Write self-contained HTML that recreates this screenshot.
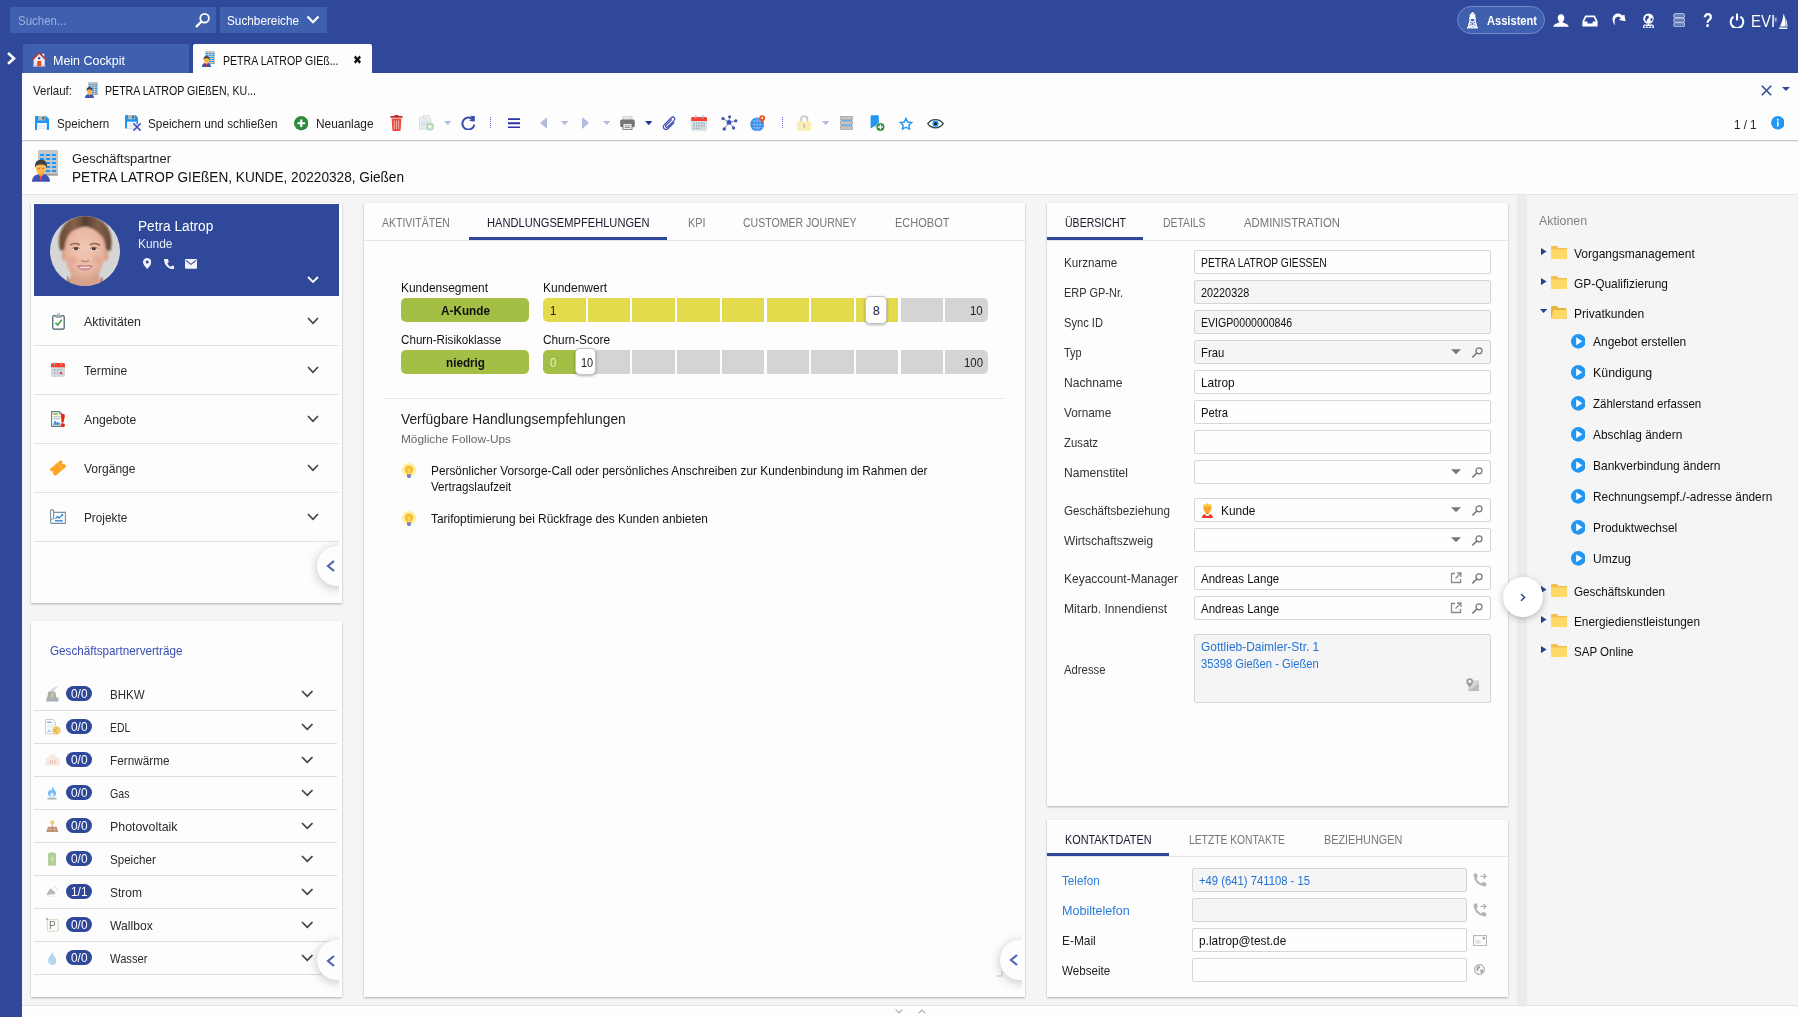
<!DOCTYPE html>
<html lang="de"><head><meta charset="utf-8"><title>PETRA LATROP GIEßEN</title>
<style>
html,body{margin:0;padding:0;}
body{width:1798px;height:1017px;overflow:hidden;background:#2f4899;font-family:"Liberation Sans", sans-serif;position:relative;}
#app{position:absolute;left:0;top:0;width:1798px;height:1017px;overflow:hidden;}
#app div,#app svg,#app span.t{position:absolute;box-sizing:border-box;}
span.t{white-space:pre;transform-origin:0 0;}
.card{background:#fdfdfd;box-shadow:0 1px 2px rgba(0,0,0,.28);}
.inp{border:1px solid #d6d6d6;border-radius:2px;background:#fefefe;}
.dis{background:#f5f5f5;}
.sep{height:1px;background:#e2e2e2;}
</style></head><body><div id="app">
<div style="left:22px;top:73px;width:1776px;height:944px;background:#fdfdfd"></div>
<div style="left:22px;top:195px;width:1776px;height:810px;background:#f5f5f5"></div>
<div style="left:22px;top:194px;width:1776px;height:1px;background:#e6e6e6"></div>
<div style="left:22px;top:1005px;width:1776px;height:1px;background:#e4e4e4"></div>
<div style="left:22px;top:140px;width:1776px;height:1px;background:#c9c9c9"></div>
<div style="left:22px;top:141px;width:1776px;height:1px;background:#ececec"></div>
<div style="left:10px;top:7px;width:205.5px;height:26px;background:#3f60af"></div>
<span class="t" style="left:17.50px;top:14px;font-size:12.58px;line-height:14px;color:#9fb0dc;transform:scaleX(0.9124);">Suchen...</span>
<svg style="left:193.6px;top:12px;" width="18" height="18" viewBox="0 0 18 18"><circle cx="10.6" cy="6.2" r="4.3" fill="none" stroke="#fff" stroke-width="1.8"/><path d="M7.4 9.6 L2.6 14.4" stroke="#fff" stroke-width="2.2" stroke-linecap="round"/></svg>
<div style="left:220px;top:7px;width:106.5px;height:26px;background:#3f60af"></div>
<span class="t" style="left:226.50px;top:14px;font-size:12.58px;line-height:14px;color:#fff;transform:scaleX(0.9360);">Suchbereiche</span>
<svg style="left:306px;top:15px;" width="14" height="10" viewBox="0 0 14 10"><path d="M1.5 1.5 L7 7.2 L12.5 1.5" fill="none" stroke="#fff" stroke-width="2.2"/></svg>
<svg style="left:5.6px;top:51.4px;" width="12" height="16" viewBox="0 0 12 16"><path d="M2 2 L8 7.4 L2 12.8" fill="none" stroke="#fff" stroke-width="2.6"/></svg>
<div style="left:23px;top:44px;width:166px;height:29px;background:#3f60af;border-radius:2px 2px 0 0"></div>
<span class="t" style="left:52.50px;top:54px;font-size:12.58px;line-height:14px;color:#fff;transform:scaleX(0.9903);">Mein Cockpit</span>
<div style="left:193px;top:44px;width:178.5px;height:29px;background:#fdfdfd;border-radius:2px 2px 0 0"></div>
<span class="t" style="left:222.50px;top:54px;font-size:12.58px;line-height:14px;color:#111;transform:scaleX(0.8416);">PETRA LATROP GIEß...</span>
<span class="t" style="left:352.90px;top:53px;font-size:12.1px;line-height:14px;color:#111;transform:scaleX(0.8800);font-family:'DejaVu Sans',sans-serif;">✖</span>
<span class="t" style="left:33.00px;top:84px;font-size:12.58px;line-height:14px;color:#222;transform:scaleX(0.9143);">Verlauf:</span>
<span class="t" style="left:104.50px;top:84px;font-size:12.58px;line-height:14px;color:#111;transform:scaleX(0.8428);">PETRA LATROP GIEßEN, KU...</span>
<svg style="left:1761px;top:85px;" width="11" height="11" viewBox="0 0 11 11"><path d="M0.8 0.8 L10.2 10.2 M10.2 0.8 L0.8 10.2" stroke="#2f4899" stroke-width="1.6"/></svg>
<svg style="left:1782px;top:87px;" width="8" height="4" viewBox="0 0 8 4"><path d="M0 0 H8 L4 4Z" fill="#2f4899"/></svg>
<span class="t" style="left:57.00px;top:117px;font-size:12.58px;line-height:14px;color:#222;transform:scaleX(0.9225);">Speichern</span>
<span class="t" style="left:147.50px;top:117px;font-size:12.58px;line-height:14px;color:#222;transform:scaleX(0.9353);">Speichern und schließen</span>
<span class="t" style="left:316.00px;top:117px;font-size:12.58px;line-height:14px;color:#222;transform:scaleX(0.9448);">Neuanlage</span>
<span class="t" style="left:1734.00px;top:117px;font-size:13.55px;line-height:15px;color:#222;transform:scaleX(0.8531);">1 / 1</span>
<span class="t" style="left:72.00px;top:151px;font-size:13.55px;line-height:15px;color:#222;transform:scaleX(0.9526);">Geschäftspartner</span>
<span class="t" style="left:72.00px;top:169px;font-size:14.52px;line-height:16px;color:#111;transform:scaleX(0.9388);">PETRA LATROP GIEßEN, KUNDE, 20220328, Gießen</span>
<div class="card" style="left:31px;top:203px;width:311px;height:400px;overflow:hidden"></div>
<div style="left:34px;top:204px;width:305px;height:92px;background:#2f4899"></div>
<span class="t" style="left:138.00px;top:218px;font-size:14.52px;line-height:16px;color:#fff;transform:scaleX(0.9419);">Petra Latrop</span>
<span class="t" style="left:138.00px;top:237px;font-size:12.58px;line-height:14px;color:#e8ecf7;transform:scaleX(0.9485);">Kunde</span>
<svg style="left:307px;top:276px;" width="12" height="8" viewBox="0 0 12 8"><path d="M1 1 L6 6 L11 1" fill="none" stroke="#fff" stroke-width="1.8"/></svg>
<span class="t" style="left:84.00px;top:314px;font-size:13.55px;line-height:15px;color:#2a2a2a;transform:scaleX(0.9120);">Aktivitäten</span>
<svg style="left:307px;top:317px;" width="12" height="8" viewBox="0 0 12 8"><path d="M1 1 L6 6.3 L11 1" fill="none" stroke="#444" stroke-width="1.7"/></svg>
<div style="left:34px;top:345px;width:305px;height:1px;background:#e2e2e2"></div>
<span class="t" style="left:84.00px;top:363px;font-size:13.55px;line-height:15px;color:#2a2a2a;transform:scaleX(0.8975);">Termine</span>
<svg style="left:307px;top:366px;" width="12" height="8" viewBox="0 0 12 8"><path d="M1 1 L6 6.3 L11 1" fill="none" stroke="#444" stroke-width="1.7"/></svg>
<div style="left:34px;top:394px;width:305px;height:1px;background:#e2e2e2"></div>
<span class="t" style="left:84.00px;top:412px;font-size:13.55px;line-height:15px;color:#2a2a2a;transform:scaleX(0.9006);">Angebote</span>
<svg style="left:307px;top:415px;" width="12" height="8" viewBox="0 0 12 8"><path d="M1 1 L6 6.3 L11 1" fill="none" stroke="#444" stroke-width="1.7"/></svg>
<div style="left:34px;top:443px;width:305px;height:1px;background:#e2e2e2"></div>
<span class="t" style="left:84.00px;top:461px;font-size:13.55px;line-height:15px;color:#2a2a2a;transform:scaleX(0.8877);">Vorgänge</span>
<svg style="left:307px;top:464px;" width="12" height="8" viewBox="0 0 12 8"><path d="M1 1 L6 6.3 L11 1" fill="none" stroke="#444" stroke-width="1.7"/></svg>
<div style="left:34px;top:492px;width:305px;height:1px;background:#e2e2e2"></div>
<span class="t" style="left:84.00px;top:510px;font-size:13.55px;line-height:15px;color:#2a2a2a;transform:scaleX(0.8702);">Projekte</span>
<svg style="left:307px;top:513px;" width="12" height="8" viewBox="0 0 12 8"><path d="M1 1 L6 6.3 L11 1" fill="none" stroke="#444" stroke-width="1.7"/></svg>
<div style="left:34px;top:541px;width:305px;height:1px;background:#e2e2e2"></div>
<div style="left:31px;top:530px;width:308px;height:72px;overflow:hidden"><div style="left:285.5px;top:16px;width:40px;height:40px;border-radius:50%;background:#fdfdfd;box-shadow:0 2px 11px rgba(0,0,0,.24)"></div></div>
<svg style="left:326px;top:560px;" width="10" height="12" viewBox="0 0 10 12"><path d="M8 1 L2 6 L8 11" fill="none" stroke="#5265b5" stroke-width="2.2"/></svg>
<div class="card" style="left:31px;top:621px;width:311px;height:376px"></div>
<span class="t" style="left:50.00px;top:644px;font-size:12.58px;line-height:14px;color:#3a4db0;transform:scaleX(0.9290);">Geschäftspartnerverträge</span>
<div style="left:65.75px;top:686.25px;width:26px;height:15px;background:#2f4899;border-radius:8px"></div>
<span class="t" style="left:70.75px;top:687px;font-size:12.58px;line-height:14px;color:#fff;transform:scaleX(0.9429);">0/0</span>
<span class="t" style="left:109.75px;top:687px;font-size:13.07px;line-height:15px;color:#2a2a2a;transform:scaleX(0.8804);">BHKW</span>
<svg style="left:300.5px;top:690.3px;" width="12.5" height="8" viewBox="0 0 12.5 8"><path d="M1 1 L6.25 6.3 L11.5 1" fill="none" stroke="#444" stroke-width="1.7"/></svg>
<div style="left:34px;top:710px;width:303px;height:1px;background:#dedede"></div>
<div style="left:65.75px;top:719.25px;width:26px;height:15px;background:#2f4899;border-radius:8px"></div>
<span class="t" style="left:70.75px;top:720px;font-size:12.58px;line-height:14px;color:#fff;transform:scaleX(0.9429);">0/0</span>
<span class="t" style="left:109.75px;top:720px;font-size:13.07px;line-height:15px;color:#2a2a2a;transform:scaleX(0.7966);">EDL</span>
<svg style="left:300.5px;top:723.3px;" width="12.5" height="8" viewBox="0 0 12.5 8"><path d="M1 1 L6.25 6.3 L11.5 1" fill="none" stroke="#444" stroke-width="1.7"/></svg>
<div style="left:34px;top:743px;width:303px;height:1px;background:#dedede"></div>
<div style="left:65.75px;top:752.25px;width:26px;height:15px;background:#2f4899;border-radius:8px"></div>
<span class="t" style="left:70.75px;top:753px;font-size:12.58px;line-height:14px;color:#fff;transform:scaleX(0.9429);">0/0</span>
<span class="t" style="left:109.75px;top:753px;font-size:13.07px;line-height:15px;color:#2a2a2a;transform:scaleX(0.9007);">Fernwärme</span>
<svg style="left:300.5px;top:756.3px;" width="12.5" height="8" viewBox="0 0 12.5 8"><path d="M1 1 L6.25 6.3 L11.5 1" fill="none" stroke="#444" stroke-width="1.7"/></svg>
<div style="left:34px;top:776px;width:303px;height:1px;background:#dedede"></div>
<div style="left:65.75px;top:785.25px;width:26px;height:15px;background:#2f4899;border-radius:8px"></div>
<span class="t" style="left:70.75px;top:786px;font-size:12.58px;line-height:14px;color:#fff;transform:scaleX(0.9429);">0/0</span>
<span class="t" style="left:109.75px;top:786px;font-size:13.07px;line-height:15px;color:#2a2a2a;transform:scaleX(0.8136);">Gas</span>
<svg style="left:300.5px;top:789.3px;" width="12.5" height="8" viewBox="0 0 12.5 8"><path d="M1 1 L6.25 6.3 L11.5 1" fill="none" stroke="#444" stroke-width="1.7"/></svg>
<div style="left:34px;top:809px;width:303px;height:1px;background:#dedede"></div>
<div style="left:65.75px;top:818.25px;width:26px;height:15px;background:#2f4899;border-radius:8px"></div>
<span class="t" style="left:70.75px;top:819px;font-size:12.58px;line-height:14px;color:#fff;transform:scaleX(0.9429);">0/0</span>
<span class="t" style="left:109.75px;top:819px;font-size:13.07px;line-height:15px;color:#2a2a2a;transform:scaleX(0.9484);">Photovoltaik</span>
<svg style="left:300.5px;top:822.3px;" width="12.5" height="8" viewBox="0 0 12.5 8"><path d="M1 1 L6.25 6.3 L11.5 1" fill="none" stroke="#444" stroke-width="1.7"/></svg>
<div style="left:34px;top:842px;width:303px;height:1px;background:#dedede"></div>
<div style="left:65.75px;top:851.25px;width:26px;height:15px;background:#2f4899;border-radius:8px"></div>
<span class="t" style="left:70.75px;top:852px;font-size:12.58px;line-height:14px;color:#fff;transform:scaleX(0.9429);">0/0</span>
<span class="t" style="left:109.75px;top:852px;font-size:13.07px;line-height:15px;color:#2a2a2a;transform:scaleX(0.8873);">Speicher</span>
<svg style="left:300.5px;top:855.3px;" width="12.5" height="8" viewBox="0 0 12.5 8"><path d="M1 1 L6.25 6.3 L11.5 1" fill="none" stroke="#444" stroke-width="1.7"/></svg>
<div style="left:34px;top:875px;width:303px;height:1px;background:#dedede"></div>
<div style="left:65.75px;top:884.25px;width:26px;height:15px;background:#2f4899;border-radius:8px"></div>
<span class="t" style="left:70.75px;top:885px;font-size:12.58px;line-height:14px;color:#fff;transform:scaleX(0.9429);">1/1</span>
<span class="t" style="left:109.75px;top:885px;font-size:13.07px;line-height:15px;color:#2a2a2a;transform:scaleX(0.9184);">Strom</span>
<svg style="left:300.5px;top:888.3px;" width="12.5" height="8" viewBox="0 0 12.5 8"><path d="M1 1 L6.25 6.3 L11.5 1" fill="none" stroke="#444" stroke-width="1.7"/></svg>
<div style="left:34px;top:908px;width:303px;height:1px;background:#dedede"></div>
<div style="left:65.75px;top:917.25px;width:26px;height:15px;background:#2f4899;border-radius:8px"></div>
<span class="t" style="left:70.75px;top:918px;font-size:12.58px;line-height:14px;color:#fff;transform:scaleX(0.9429);">0/0</span>
<span class="t" style="left:109.75px;top:918px;font-size:13.07px;line-height:15px;color:#2a2a2a;transform:scaleX(0.9297);">Wallbox</span>
<svg style="left:300.5px;top:921.3px;" width="12.5" height="8" viewBox="0 0 12.5 8"><path d="M1 1 L6.25 6.3 L11.5 1" fill="none" stroke="#444" stroke-width="1.7"/></svg>
<div style="left:34px;top:941px;width:303px;height:1px;background:#dedede"></div>
<div style="left:65.75px;top:950.25px;width:26px;height:15px;background:#2f4899;border-radius:8px"></div>
<span class="t" style="left:70.75px;top:951px;font-size:12.58px;line-height:14px;color:#fff;transform:scaleX(0.9429);">0/0</span>
<span class="t" style="left:109.75px;top:951px;font-size:13.07px;line-height:15px;color:#2a2a2a;transform:scaleX(0.8562);">Wasser</span>
<svg style="left:300.5px;top:954.3px;" width="12.5" height="8" viewBox="0 0 12.5 8"><path d="M1 1 L6.25 6.3 L11.5 1" fill="none" stroke="#444" stroke-width="1.7"/></svg>
<div style="left:34px;top:974px;width:303px;height:1px;background:#dedede"></div>
<div style="left:31px;top:925px;width:308px;height:70px;overflow:hidden"><div style="left:285.5px;top:15px;width:40px;height:40px;border-radius:50%;background:#fdfdfd;box-shadow:0 2px 11px rgba(0,0,0,.24)"></div></div>
<svg style="left:326px;top:954.5px;" width="10" height="12" viewBox="0 0 10 12"><path d="M8 1 L2 6 L8 11" fill="none" stroke="#5265b5" stroke-width="2.2"/></svg>
<div class="card" style="left:364px;top:203px;width:661px;height:794px"></div>
<div style="left:364px;top:240px;width:661px;height:1px;background:#e4e4e4"></div>
<div style="left:469px;top:236.5px;width:197.5px;height:3px;background:#2f4899"></div>
<span class="t" style="left:381.50px;top:216px;font-size:12.58px;line-height:14px;color:#777;transform:scaleX(0.8356);">AKTIVITÄTEN</span>
<span class="t" style="left:486.50px;top:216px;font-size:12.58px;line-height:14px;color:#1a1a2e;transform:scaleX(0.8841);">HANDLUNGSEMPFEHLUNGEN</span>
<span class="t" style="left:687.50px;top:216px;font-size:12.58px;line-height:14px;color:#777;transform:scaleX(0.8629);">KPI</span>
<span class="t" style="left:742.50px;top:216px;font-size:12.58px;line-height:14px;color:#777;transform:scaleX(0.8385);">CUSTOMER JOURNEY</span>
<span class="t" style="left:894.50px;top:216px;font-size:12.58px;line-height:14px;color:#777;transform:scaleX(0.8762);">ECHOBOT</span>
<span class="t" style="left:401.00px;top:281px;font-size:12.58px;line-height:14px;color:#111;transform:scaleX(0.9497);">Kundensegment</span>
<span class="t" style="left:543.00px;top:281px;font-size:12.58px;line-height:14px;color:#111;transform:scaleX(0.9532);">Kundenwert</span>
<span class="t" style="left:401.00px;top:333px;font-size:12.58px;line-height:14px;color:#111;transform:scaleX(0.9252);">Churn-Risikoklasse</span>
<span class="t" style="left:543.00px;top:333px;font-size:12.58px;line-height:14px;color:#111;transform:scaleX(0.9395);">Churn-Score</span>
<div style="left:401.25px;top:298px;width:127.5px;height:24px;background:#a3bf45;border-radius:5px"></div>
<span class="t" style="left:441.00px;top:304px;font-size:12.58px;line-height:14px;color:#111;font-weight:700;transform:scaleX(0.9350);">A-Kunde</span>
<div style="left:401.25px;top:350px;width:127.5px;height:24px;background:#a3bf45;border-radius:5px"></div>
<span class="t" style="left:446.00px;top:356px;font-size:12.58px;line-height:14px;color:#111;font-weight:700;transform:scaleX(0.9300);">niedrig</span>
<div style="left:543.0px;top:298px;width:42.5px;height:24px;background:#e3db4b;border-radius:5px 0 0 5px;"></div>
<div style="left:587.7px;top:298px;width:42.5px;height:24px;background:#e3db4b;"></div>
<div style="left:632.4px;top:298px;width:42.5px;height:24px;background:#e3db4b;"></div>
<div style="left:677.1px;top:298px;width:42.5px;height:24px;background:#e3db4b;"></div>
<div style="left:721.8px;top:298px;width:42.5px;height:24px;background:#e3db4b;"></div>
<div style="left:766.5px;top:298px;width:42.5px;height:24px;background:#e3db4b;"></div>
<div style="left:811.2px;top:298px;width:42.5px;height:24px;background:#e3db4b;"></div>
<div style="left:855.9px;top:298px;width:42.5px;height:24px;background:#e3db4b;"></div>
<div style="left:900.6px;top:298px;width:42.5px;height:24px;background:#d4d4d4;"></div>
<div style="left:945.3px;top:298px;width:42.7px;height:24px;background:#d4d4d4;border-radius:0 5px 5px 0;"></div>
<div style="left:543.0px;top:350px;width:42.5px;height:24px;background:#a3bf45;border-radius:5px 0 0 5px;"></div>
<div style="left:587.7px;top:350px;width:42.5px;height:24px;background:#d4d4d4;"></div>
<div style="left:632.4px;top:350px;width:42.5px;height:24px;background:#d4d4d4;"></div>
<div style="left:677.1px;top:350px;width:42.5px;height:24px;background:#d4d4d4;"></div>
<div style="left:721.8px;top:350px;width:42.5px;height:24px;background:#d4d4d4;"></div>
<div style="left:766.5px;top:350px;width:42.5px;height:24px;background:#d4d4d4;"></div>
<div style="left:811.2px;top:350px;width:42.5px;height:24px;background:#d4d4d4;"></div>
<div style="left:855.9px;top:350px;width:42.5px;height:24px;background:#d4d4d4;"></div>
<div style="left:900.6px;top:350px;width:42.5px;height:24px;background:#d4d4d4;"></div>
<div style="left:945.3px;top:350px;width:42.7px;height:24px;background:#d4d4d4;border-radius:0 5px 5px 0;"></div>
<span class="t" style="left:550.25px;top:304px;font-size:12.58px;line-height:14px;color:#222;transform:scaleX(0.9050);">1</span>
<span class="t" style="left:970.33px;top:304px;font-size:12.58px;line-height:14px;color:#222;transform:scaleX(0.9050);">10</span>
<span class="t" style="left:550.00px;top:356px;font-size:12.58px;line-height:14px;color:#eaf2c8;transform:scaleX(0.9050);">0</span>
<span class="t" style="left:964.00px;top:356px;font-size:12.58px;line-height:14px;color:#222;transform:scaleX(0.9050);">100</span>
<div style="left:865.4px;top:296px;width:21.3px;height:27.5px;background:#fff;border:1px solid #c4c4c4;border-radius:5px;box-shadow:0 1px 3px rgba(0,0,0,.3)"></div>
<span class="t" style="left:872.70px;top:304px;font-size:12.58px;line-height:14px;color:#222;">8</span>
<div style="left:575.2px;top:348.2px;width:21px;height:27.3px;background:#fff;border:1px solid #c4c4c4;border-radius:5px;box-shadow:0 1px 3px rgba(0,0,0,.3)"></div>
<span class="t" style="left:580.50px;top:356px;font-size:12.58px;line-height:14px;color:#222;transform:scaleX(0.8714);">10</span>
<div style="left:383px;top:398px;width:622px;height:1px;background:#e8e8e8"></div>
<span class="t" style="left:401.25px;top:411px;font-size:14.52px;line-height:16px;color:#222;transform:scaleX(0.9504);">Verfügbare Handlungsempfehlungen</span>
<span class="t" style="left:401.00px;top:432px;font-size:11.62px;line-height:13px;color:#666;transform:scaleX(1.0209);">Mögliche Follow-Ups</span>
<span class="t" style="left:431.00px;top:464px;font-size:12.58px;line-height:14px;color:#111;transform:scaleX(0.9418);">Persönlicher Vorsorge-Call oder persönliches Anschreiben zur Kundenbindung im Rahmen der</span>
<span class="t" style="left:431.00px;top:480px;font-size:12.58px;line-height:14px;color:#111;transform:scaleX(0.9256);">Vertragslaufzeit</span>
<span class="t" style="left:431.00px;top:512px;font-size:12.58px;line-height:14px;color:#111;transform:scaleX(0.9454);">Tarifoptimierung bei Rückfrage des Kunden anbieten</span>
<div style="left:980px;top:925px;width:42px;height:70px;overflow:hidden"><div style="left:20px;top:15px;width:40px;height:40px;border-radius:50%;background:#fdfdfd;box-shadow:0 2px 11px rgba(0,0,0,.24)"></div></div>
<svg style="left:997px;top:971px;" width="6" height="6" viewBox="0 0 6 6"><path d="M0 5 H5 V0" fill="none" stroke="#bdbdbd" stroke-width="1.2"/></svg>
<svg style="left:1009px;top:954px;" width="10" height="12" viewBox="0 0 10 12"><path d="M8 1 L2 6 L8 11" fill="none" stroke="#5265b5" stroke-width="2.2"/></svg>
<div class="card" style="left:1047px;top:203px;width:461px;height:602.5px"></div>
<div style="left:1047px;top:240px;width:461px;height:1px;background:#e4e4e4"></div>
<div style="left:1047px;top:236.5px;width:95.5px;height:3px;background:#2f4899"></div>
<span class="t" style="left:1064.50px;top:216px;font-size:12.58px;line-height:14px;color:#1a1a2e;transform:scaleX(0.8392);">ÜBERSICHT</span>
<span class="t" style="left:1162.50px;top:216px;font-size:12.58px;line-height:14px;color:#777;transform:scaleX(0.8252);">DETAILS</span>
<span class="t" style="left:1243.50px;top:216px;font-size:12.58px;line-height:14px;color:#777;transform:scaleX(0.8998);">ADMINISTRATION</span>
<div class="inp" style="left:1193.5px;top:250.25px;width:297.5px;height:23.5px"></div>
<span class="t" style="left:1064.00px;top:256px;font-size:12.58px;line-height:14px;color:#333;transform:scaleX(0.9289);">Kurzname</span>
<span class="t" style="left:1201.00px;top:256px;font-size:12.58px;line-height:14px;color:#111;transform:scaleX(0.8201);">PETRA LATROP GIESSEN</span>
<div class="inp dis" style="left:1193.5px;top:280.25px;width:297.5px;height:23.5px"></div>
<span class="t" style="left:1064.00px;top:286px;font-size:12.58px;line-height:14px;color:#333;transform:scaleX(0.8731);">ERP GP-Nr.</span>
<span class="t" style="left:1201.00px;top:286px;font-size:12.58px;line-height:14px;color:#111;transform:scaleX(0.8621);">20220328</span>
<div class="inp dis" style="left:1193.5px;top:310.25px;width:297.5px;height:23.5px"></div>
<span class="t" style="left:1064.00px;top:316px;font-size:12.58px;line-height:14px;color:#333;transform:scaleX(0.8854);">Sync ID</span>
<span class="t" style="left:1201.00px;top:316px;font-size:12.58px;line-height:14px;color:#111;transform:scaleX(0.8417);">EVIGP0000000846</span>
<div class="inp dis" style="left:1193.5px;top:340.25px;width:297.5px;height:23.5px"></div>
<span class="t" style="left:1064.00px;top:346px;font-size:12.58px;line-height:14px;color:#333;transform:scaleX(0.8752);">Typ</span>
<span class="t" style="left:1201.00px;top:346px;font-size:12.58px;line-height:14px;color:#111;transform:scaleX(0.8986);">Frau</span>
<svg style="left:1450.75px;top:349.25px;" width="10" height="5.4" viewBox="0 0 10 5"><path d="M0 0 H10 L5 5Z" fill="#777"/></svg>
<svg style="left:1471.5px;top:347.25px;" width="11" height="11" viewBox="0 0 11 11"><circle cx="7" cy="3.8" r="3" fill="none" stroke="#777" stroke-width="1.3"/><path d="M4.8 6 L0.9 9.9" stroke="#777" stroke-width="1.6" stroke-linecap="round"/></svg>
<div class="inp" style="left:1193.5px;top:370.25px;width:297.5px;height:23.5px"></div>
<span class="t" style="left:1064.00px;top:376px;font-size:12.58px;line-height:14px;color:#333;transform:scaleX(0.9617);">Nachname</span>
<span class="t" style="left:1201.00px;top:376px;font-size:12.58px;line-height:14px;color:#111;transform:scaleX(0.9461);">Latrop</span>
<div class="inp" style="left:1193.5px;top:400.25px;width:297.5px;height:23.5px"></div>
<span class="t" style="left:1064.00px;top:406px;font-size:12.58px;line-height:14px;color:#333;transform:scaleX(0.9385);">Vorname</span>
<span class="t" style="left:1201.00px;top:406px;font-size:12.58px;line-height:14px;color:#111;transform:scaleX(0.8977);">Petra</span>
<div class="inp" style="left:1193.5px;top:430.25px;width:297.5px;height:23.5px"></div>
<span class="t" style="left:1064.00px;top:436px;font-size:12.58px;line-height:14px;color:#333;transform:scaleX(0.9007);">Zusatz</span>
<div class="inp" style="left:1193.5px;top:460.25px;width:297.5px;height:23.5px"></div>
<span class="t" style="left:1064.00px;top:466px;font-size:12.58px;line-height:14px;color:#333;transform:scaleX(0.9635);">Namenstitel</span>
<svg style="left:1450.75px;top:469.25px;" width="10" height="5.4" viewBox="0 0 10 5"><path d="M0 0 H10 L5 5Z" fill="#777"/></svg>
<svg style="left:1471.5px;top:467.25px;" width="11" height="11" viewBox="0 0 11 11"><circle cx="7" cy="3.8" r="3" fill="none" stroke="#777" stroke-width="1.3"/><path d="M4.8 6 L0.9 9.9" stroke="#777" stroke-width="1.6" stroke-linecap="round"/></svg>
<div class="inp" style="left:1193.5px;top:498.25px;width:297.5px;height:23.5px"></div>
<span class="t" style="left:1064.00px;top:504px;font-size:12.58px;line-height:14px;color:#333;transform:scaleX(0.9243);">Geschäftsbeziehung</span>
<span class="t" style="left:1220.50px;top:504px;font-size:12.58px;line-height:14px;color:#111;transform:scaleX(0.9485);">Kunde</span>
<svg style="left:1450.75px;top:507px;" width="10" height="5.4" viewBox="0 0 10 5"><path d="M0 0 H10 L5 5Z" fill="#777"/></svg>
<svg style="left:1471.5px;top:505px;" width="11" height="11" viewBox="0 0 11 11"><circle cx="7" cy="3.8" r="3" fill="none" stroke="#777" stroke-width="1.3"/><path d="M4.8 6 L0.9 9.9" stroke="#777" stroke-width="1.6" stroke-linecap="round"/></svg>
<div class="inp" style="left:1193.5px;top:528.25px;width:297.5px;height:23.5px"></div>
<span class="t" style="left:1064.00px;top:534px;font-size:12.58px;line-height:14px;color:#333;transform:scaleX(0.9432);">Wirtschaftszweig</span>
<svg style="left:1450.75px;top:537px;" width="10" height="5.4" viewBox="0 0 10 5"><path d="M0 0 H10 L5 5Z" fill="#777"/></svg>
<svg style="left:1471.5px;top:535px;" width="11" height="11" viewBox="0 0 11 11"><circle cx="7" cy="3.8" r="3" fill="none" stroke="#777" stroke-width="1.3"/><path d="M4.8 6 L0.9 9.9" stroke="#777" stroke-width="1.6" stroke-linecap="round"/></svg>
<div class="inp" style="left:1193.5px;top:566.25px;width:297.5px;height:23.5px"></div>
<span class="t" style="left:1064.00px;top:572px;font-size:12.58px;line-height:14px;color:#333;transform:scaleX(0.9535);">Keyaccount-Manager</span>
<span class="t" style="left:1201.00px;top:572px;font-size:12.58px;line-height:14px;color:#111;transform:scaleX(0.9170);">Andreas Lange</span>
<svg style="left:1449.5px;top:572px;" width="12" height="12" viewBox="0 0 12 12"><path d="M5 1.5 H1.5 V10.5 H10.5 V7" fill="none" stroke="#8a8a8a" stroke-width="1.3"/><path d="M7 1 H11 V5 M11 1 L5.5 6.5" fill="none" stroke="#8a8a8a" stroke-width="1.3"/></svg>
<svg style="left:1471.5px;top:573px;" width="11" height="11" viewBox="0 0 11 11"><circle cx="7" cy="3.8" r="3" fill="none" stroke="#777" stroke-width="1.3"/><path d="M4.8 6 L0.9 9.9" stroke="#777" stroke-width="1.6" stroke-linecap="round"/></svg>
<div class="inp" style="left:1193.5px;top:596.25px;width:297.5px;height:23.5px"></div>
<span class="t" style="left:1064.00px;top:602px;font-size:12.58px;line-height:14px;color:#333;transform:scaleX(0.9651);">Mitarb. Innendienst</span>
<span class="t" style="left:1201.00px;top:602px;font-size:12.58px;line-height:14px;color:#111;transform:scaleX(0.9170);">Andreas Lange</span>
<svg style="left:1449.5px;top:602px;" width="12" height="12" viewBox="0 0 12 12"><path d="M5 1.5 H1.5 V10.5 H10.5 V7" fill="none" stroke="#8a8a8a" stroke-width="1.3"/><path d="M7 1 H11 V5 M11 1 L5.5 6.5" fill="none" stroke="#8a8a8a" stroke-width="1.3"/></svg>
<svg style="left:1471.5px;top:603px;" width="11" height="11" viewBox="0 0 11 11"><circle cx="7" cy="3.8" r="3" fill="none" stroke="#777" stroke-width="1.3"/><path d="M4.8 6 L0.9 9.9" stroke="#777" stroke-width="1.6" stroke-linecap="round"/></svg>
<div class="inp dis" style="left:1193.5px;top:634.25px;width:297.5px;height:68.25px"></div>
<span class="t" style="left:1064.00px;top:663px;font-size:12.58px;line-height:14px;color:#333;transform:scaleX(0.8991);">Adresse</span>
<span class="t" style="left:1201.00px;top:640px;font-size:12.58px;line-height:14px;color:#2374d4;transform:scaleX(0.9504);">Gottlieb-Daimler-Str. 1</span>
<span class="t" style="left:1201.00px;top:657px;font-size:12.58px;line-height:14px;color:#2374d4;transform:scaleX(0.8910);">35398 Gießen - Gießen</span>
<div class="card" style="left:1047px;top:820px;width:461px;height:177px"></div>
<div style="left:1047px;top:856px;width:461px;height:1px;background:#e4e4e4"></div>
<div style="left:1047px;top:852.5px;width:121.75px;height:3px;background:#2f4899"></div>
<span class="t" style="left:1064.50px;top:833px;font-size:12.58px;line-height:14px;color:#1a1a2e;transform:scaleX(0.8635);">KONTAKTDATEN</span>
<span class="t" style="left:1188.75px;top:833px;font-size:12.58px;line-height:14px;color:#777;transform:scaleX(0.8192);">LETZTE KONTAKTE</span>
<span class="t" style="left:1323.75px;top:833px;font-size:12.58px;line-height:14px;color:#777;transform:scaleX(0.8612);">BEZIEHUNGEN</span>
<div class="inp dis" style="left:1192px;top:868.25px;width:274.5px;height:23.5px"></div>
<span class="t" style="left:1062.25px;top:873px;font-size:13.07px;line-height:15px;color:#2a7bd6;transform:scaleX(0.8961);">Telefon</span>
<span class="t" style="left:1199.00px;top:874px;font-size:12.58px;line-height:14px;color:#2374d4;transform:scaleX(0.8958);">+49 (641) 741108 - 15</span>
<div class="inp dis" style="left:1192px;top:898.25px;width:274.5px;height:23.5px"></div>
<span class="t" style="left:1062.25px;top:903px;font-size:13.07px;line-height:15px;color:#2a7bd6;transform:scaleX(0.9618);">Mobiltelefon</span>
<div class="inp" style="left:1192px;top:928.25px;width:274.5px;height:23.5px"></div>
<span class="t" style="left:1062.25px;top:933px;font-size:13.07px;line-height:15px;color:#222;transform:scaleX(0.9118);">E-Mail</span>
<span class="t" style="left:1199.00px;top:934px;font-size:12.58px;line-height:14px;color:#111;transform:scaleX(0.9434);">p.latrop@test.de</span>
<div class="inp" style="left:1192px;top:958.25px;width:274.5px;height:23.5px"></div>
<span class="t" style="left:1062.25px;top:963px;font-size:13.07px;line-height:15px;color:#222;transform:scaleX(0.8899);">Webseite</span>
<div style="left:1517px;top:195px;width:10px;height:810px;background:#ebebeb"></div>
<span class="t" style="left:1539.00px;top:214px;font-size:12.58px;line-height:14px;color:#808080;transform:scaleX(0.9805);">Aktionen</span>
<svg style="left:1541.25px;top:248.25px;" width="5.5" height="7.2" viewBox="0 0 5.5 7.2"><path d="M0 0 L5.5 3.6 L0 7.2Z" fill="#2a3f8f"/></svg>
<svg style="left:1550.75px;top:246.25px;" width="16.5" height="13" viewBox="0 0 16.8 13"><path d="M0 1.2 Q0 0 1.2 0 H6 L7.6 1.8 H15.6 Q16.8 1.8 16.8 3 V11.8 Q16.8 13 15.6 13 H1.2 Q0 13 0 11.8Z" fill="#f2c14b"/><path d="M0 3.4 H16.8 V11.8 Q16.8 13 15.6 13 H1.2 Q0 13 0 11.8Z" fill="#ffd968"/></svg>
<span class="t" style="left:1574.00px;top:247px;font-size:12.58px;line-height:14px;color:#111;transform:scaleX(0.9540);">Vorgangsmanagement</span>
<svg style="left:1541.25px;top:278.25px;" width="5.5" height="7.2" viewBox="0 0 5.5 7.2"><path d="M0 0 L5.5 3.6 L0 7.2Z" fill="#2a3f8f"/></svg>
<svg style="left:1550.75px;top:276.25px;" width="16.5" height="13" viewBox="0 0 16.8 13"><path d="M0 1.2 Q0 0 1.2 0 H6 L7.6 1.8 H15.6 Q16.8 1.8 16.8 3 V11.8 Q16.8 13 15.6 13 H1.2 Q0 13 0 11.8Z" fill="#f2c14b"/><path d="M0 3.4 H16.8 V11.8 Q16.8 13 15.6 13 H1.2 Q0 13 0 11.8Z" fill="#ffd968"/></svg>
<span class="t" style="left:1574.00px;top:277px;font-size:12.58px;line-height:14px;color:#111;transform:scaleX(0.9468);">GP-Qualifizierung</span>
<svg style="left:1540px;top:309.25px;" width="7.2" height="4" viewBox="0 0 7.2 4"><path d="M0 0 H7.2 L3.6 4Z" fill="#2a3f8f"/></svg>
<svg style="left:1550.75px;top:306.25px;" width="16.5" height="13" viewBox="0 0 16.8 13"><path d="M0 1.2 Q0 0 1.2 0 H6 L7.6 1.8 H14.6 Q15.8 1.8 15.8 3 V13 H0Z" fill="#e8b33e"/><path d="M2.4 4 H16.8 L14.6 13 H0Z" fill="#ffd968"/></svg>
<span class="t" style="left:1574.00px;top:307px;font-size:12.58px;line-height:14px;color:#111;transform:scaleX(0.9568);">Privatkunden</span>
<svg style="left:1541.25px;top:586.0px;" width="5.5" height="7.2" viewBox="0 0 5.5 7.2"><path d="M0 0 L5.5 3.6 L0 7.2Z" fill="#2a3f8f"/></svg>
<svg style="left:1550.75px;top:584.0px;" width="16.5" height="13" viewBox="0 0 16.8 13"><path d="M0 1.2 Q0 0 1.2 0 H6 L7.6 1.8 H15.6 Q16.8 1.8 16.8 3 V11.8 Q16.8 13 15.6 13 H1.2 Q0 13 0 11.8Z" fill="#f2c14b"/><path d="M0 3.4 H16.8 V11.8 Q16.8 13 15.6 13 H1.2 Q0 13 0 11.8Z" fill="#ffd968"/></svg>
<span class="t" style="left:1574.00px;top:585px;font-size:12.58px;line-height:14px;color:#111;transform:scaleX(0.9295);">Geschäftskunden</span>
<svg style="left:1541.25px;top:616.0px;" width="5.5" height="7.2" viewBox="0 0 5.5 7.2"><path d="M0 0 L5.5 3.6 L0 7.2Z" fill="#2a3f8f"/></svg>
<svg style="left:1550.75px;top:614.0px;" width="16.5" height="13" viewBox="0 0 16.8 13"><path d="M0 1.2 Q0 0 1.2 0 H6 L7.6 1.8 H15.6 Q16.8 1.8 16.8 3 V11.8 Q16.8 13 15.6 13 H1.2 Q0 13 0 11.8Z" fill="#f2c14b"/><path d="M0 3.4 H16.8 V11.8 Q16.8 13 15.6 13 H1.2 Q0 13 0 11.8Z" fill="#ffd968"/></svg>
<span class="t" style="left:1574.00px;top:615px;font-size:12.58px;line-height:14px;color:#111;transform:scaleX(0.9384);">Energiedienstleistungen</span>
<svg style="left:1541.25px;top:645.75px;" width="5.5" height="7.2" viewBox="0 0 5.5 7.2"><path d="M0 0 L5.5 3.6 L0 7.2Z" fill="#2a3f8f"/></svg>
<svg style="left:1550.75px;top:643.75px;" width="16.5" height="13" viewBox="0 0 16.8 13"><path d="M0 1.2 Q0 0 1.2 0 H6 L7.6 1.8 H15.6 Q16.8 1.8 16.8 3 V11.8 Q16.8 13 15.6 13 H1.2 Q0 13 0 11.8Z" fill="#f2c14b"/><path d="M0 3.4 H16.8 V11.8 Q16.8 13 15.6 13 H1.2 Q0 13 0 11.8Z" fill="#ffd968"/></svg>
<span class="t" style="left:1574.00px;top:645px;font-size:12.58px;line-height:14px;color:#111;transform:scaleX(0.9183);">SAP Online</span>
<svg style="left:1570.75px;top:334.35px;" width="14.7" height="14.7" viewBox="0 0 15 15"><circle cx="7.5" cy="7.5" r="7.5" fill="#2196f3"/><path d="M5.3 3.4 L11.6 7.5 L5.3 11.6Z" fill="#fff"/></svg>
<span class="t" style="left:1593.00px;top:335px;font-size:12.58px;line-height:14px;color:#111;transform:scaleX(0.9524);">Angebot erstellen</span>
<svg style="left:1570.75px;top:365.35px;" width="14.7" height="14.7" viewBox="0 0 15 15"><circle cx="7.5" cy="7.5" r="7.5" fill="#2196f3"/><path d="M5.3 3.4 L11.6 7.5 L5.3 11.6Z" fill="#fff"/></svg>
<span class="t" style="left:1593.00px;top:366px;font-size:12.58px;line-height:14px;color:#111;transform:scaleX(0.9849);">Kündigung</span>
<svg style="left:1570.75px;top:396.35px;" width="14.7" height="14.7" viewBox="0 0 15 15"><circle cx="7.5" cy="7.5" r="7.5" fill="#2196f3"/><path d="M5.3 3.4 L11.6 7.5 L5.3 11.6Z" fill="#fff"/></svg>
<span class="t" style="left:1593.00px;top:397px;font-size:12.58px;line-height:14px;color:#111;transform:scaleX(0.9160);">Zählerstand erfassen</span>
<svg style="left:1570.75px;top:427.35px;" width="14.7" height="14.7" viewBox="0 0 15 15"><circle cx="7.5" cy="7.5" r="7.5" fill="#2196f3"/><path d="M5.3 3.4 L11.6 7.5 L5.3 11.6Z" fill="#fff"/></svg>
<span class="t" style="left:1593.00px;top:428px;font-size:12.58px;line-height:14px;color:#111;transform:scaleX(0.9454);">Abschlag ändern</span>
<svg style="left:1570.75px;top:458.35px;" width="14.7" height="14.7" viewBox="0 0 15 15"><circle cx="7.5" cy="7.5" r="7.5" fill="#2196f3"/><path d="M5.3 3.4 L11.6 7.5 L5.3 11.6Z" fill="#fff"/></svg>
<span class="t" style="left:1593.00px;top:459px;font-size:12.58px;line-height:14px;color:#111;transform:scaleX(0.9545);">Bankverbindung ändern</span>
<svg style="left:1570.75px;top:489.35px;" width="14.7" height="14.7" viewBox="0 0 15 15"><circle cx="7.5" cy="7.5" r="7.5" fill="#2196f3"/><path d="M5.3 3.4 L11.6 7.5 L5.3 11.6Z" fill="#fff"/></svg>
<span class="t" style="left:1593.00px;top:490px;font-size:12.58px;line-height:14px;color:#111;transform:scaleX(0.9425);">Rechnungsempf./-adresse ändern</span>
<svg style="left:1570.75px;top:520.35px;" width="14.7" height="14.7" viewBox="0 0 15 15"><circle cx="7.5" cy="7.5" r="7.5" fill="#2196f3"/><path d="M5.3 3.4 L11.6 7.5 L5.3 11.6Z" fill="#fff"/></svg>
<span class="t" style="left:1593.00px;top:521px;font-size:12.58px;line-height:14px;color:#111;transform:scaleX(0.9488);">Produktwechsel</span>
<svg style="left:1570.75px;top:551.35px;" width="14.7" height="14.7" viewBox="0 0 15 15"><circle cx="7.5" cy="7.5" r="7.5" fill="#2196f3"/><path d="M5.3 3.4 L11.6 7.5 L5.3 11.6Z" fill="#fff"/></svg>
<span class="t" style="left:1593.00px;top:552px;font-size:12.58px;line-height:14px;color:#111;transform:scaleX(0.9537);">Umzug</span>
<div style="left:1503px;top:577px;width:40px;height:40px;border-radius:50%;background:#fff;box-shadow:0 2px 7px rgba(0,0,0,.25)"></div>
<svg style="left:1520px;top:592.5px;" width="6" height="9" viewBox="0 0 6 9"><path d="M1 1 L4.6 4.4 L1 7.8" fill="none" stroke="#2a3f8f" stroke-width="1.4"/></svg>
<svg style="left:894.5px;top:1008.5px;" width="8" height="5" viewBox="0 0 8 5"><path d="M0.6 0.6 L4 4 L7.4 0.6" fill="none" stroke="#a9a9a9" stroke-width="1.1"/></svg>
<svg style="left:917.5px;top:1008.5px;" width="8" height="5" viewBox="0 0 8 5"><path d="M0.6 4.4 L4 1 L7.4 4.4" fill="none" stroke="#a9a9a9" stroke-width="1.1"/></svg>
<div style="left:1457px;top:6px;width:87.5px;height:28px;background:#3f60af;border:1px solid #7288c9;border-radius:14px"></div>
<svg style="left:1465.5px;top:11.5px;" width="13" height="17" viewBox="0 0 13 17"><g fill="none" stroke="#fff" stroke-width="1.3" stroke-linejoin="round"><path d="M4.6 2.6 L6.5 0.8 L8.4 2.6"/><path d="M4.3 3 H8.7 V6 H4.3Z" fill="#fff"/><path d="M3 6.4 H10"/><path d="M4.4 6.6 L2.2 15.6 M8.6 6.6 L10.8 15.6"/><path d="M4 9 L9.6 11.8 M9 9 L3.4 11.8 M3.3 12.4 L10.3 15.2 M9.7 12.4 L2.7 15.2"/><path d="M1 15.8 H12"/></g></svg>
<span class="t" style="left:1487.00px;top:14px;font-size:12.58px;line-height:14px;color:#fff;font-weight:700;transform:scaleX(0.8830);">Assistent</span>
<svg style="left:1553px;top:13.5px;" width="16" height="13" viewBox="0 0 16 13"><path d="M8 0.2 C10.4 0.2 11.3 2 11.3 4 C11.3 5.6 10.6 7 9.8 7.6 V8.6 C11.6 9.4 15 10 15.8 12.8 H0.2 C1 10 4.4 9.4 6.2 8.6 V7.6 C5.4 7 4.7 5.6 4.7 4 C4.7 2 5.6 0.2 8 0.2Z" fill="#fff"/></svg>
<svg style="left:1582px;top:15px;" width="16" height="12" viewBox="0 0 16 12"><path d="M3.2 0.6 H12.8 L15.6 6.2 V11.6 H0.4 V6.2Z M4.3 2.2 L2.2 6.6 H5.4 V8.4 H10.6 V6.6 H13.8 L11.7 2.2Z" fill="#fff" fill-rule="evenodd"/></svg>
<svg style="left:1612px;top:13px;" width="14" height="13" viewBox="0 0 14 13"><path d="M3 12.6 C0.4 9 -0.6 4.6 2.4 2 C5 -0.2 8.4 0.2 10.2 2.6 L12.4 1.8 L13.6 8.2 L6.9 7 L8.8 5.2 C7.4 3.4 5.4 3.4 4 4.6 C2.2 6.4 2.4 9.4 3 12.6Z" fill="#fff"/></svg>
<svg style="left:1642px;top:12.5px;" width="13" height="15.5" viewBox="0 0 13 15.5"><circle cx="6.5" cy="5.6" r="5.2" fill="#fff"/><path d="M4 3 L6.4 2.6 L7 4.6 L5.2 6.6 L4.4 9.2 L3 6.2Z M8.6 5.2 L10.6 5 L10.4 7.6 L8.6 8.6Z" fill="#2f4899"/><path d="M6.5 10.8 V12.6" stroke="#fff" stroke-width="1.4"/><rect x="1.6" y="12.2" width="9.8" height="3" rx="1.4" fill="none" stroke="#fff" stroke-width="1.2"/><path d="M5 12.4 V15 M8 12.4 V15" stroke="#fff" stroke-width="1"/></svg>
<svg style="left:1672.6px;top:12.8px;" width="12.4" height="14.4" viewBox="0 0 12.4 14.4"><g fill="rgba(255,255,255,.28)" stroke="#c3cbee" stroke-width="1"><rect x="0.6" y="0.6" width="11.2" height="4.2" rx="2.1"/><rect x="0.6" y="5.1" width="11.2" height="4.2" rx="2.1"/><rect x="0.6" y="9.6" width="11.2" height="4.2" rx="2.1"/></g></svg>
<span class="t" style="left:1702.70px;top:9px;font-size:19.84px;line-height:22px;color:#fff;font-weight:700;transform:scaleX(0.8082);">?</span>
<svg style="left:1728.5px;top:12.5px;" width="16" height="15.5" viewBox="0 0 16 15.5"><path d="M4.6 3.6 A6.3 6.3 0 1 0 11.4 3.6" fill="none" stroke="#fff" stroke-width="2"/><path d="M8 0.6 V7.4" stroke="#fff" stroke-width="2.1"/></svg>
<span class="t" style="left:1750.70px;top:12px;font-size:16.07px;line-height:18px;color:#fff;transform:scaleX(0.9289);">EVI</span>
<span class="t" style="left:1774.10px;top:18px;font-size:4.84px;line-height:5px;color:#fff;transform:scaleX(0.9050);">®</span>
<svg style="left:1778px;top:12.5px;" width="10" height="16.5" viewBox="0 0 10 16.5"><path d="M5.6 0.4 C7.4 5 8 9.4 7.6 13.6 H2 C3.8 9.6 5 5.2 5.6 0.4Z M7.4 4.6 C8.6 7.4 9.4 10.4 9.6 13.6 H8.4 C8.4 10.4 8 7.6 7.4 4.6Z M0.6 14.4 H9.8 L8.8 16.2 H2Z" fill="#fff"/></svg>
<svg style="left:35px;top:116px;" width="14" height="14" viewBox="0 0 14 14"><path d="M0.6 0 H11 L14 3 V13.4 Q14 14 13.4 14 H0.6 Q0 14 0 13.4 V0.6 Q0 0 0.6 0Z" fill="#2196f3"/><rect x="3.2" y="0" width="7" height="4.4" fill="#b0bec5"/><rect x="7.4" y="0.8" width="1.8" height="2.8" fill="#455a64"/><rect x="2.2" y="7" width="9.6" height="7" fill="#fff"/><path d="M3.4 8.8 H10.6 M3.4 10.6 H10.6 M3.4 12.4 H10.6" stroke="#cfd8dc" stroke-width="0.7"/></svg>
<svg style="left:124.5px;top:115px;" width="13.5" height="13.5" viewBox="0 0 14 14"><path d="M0.6 0 H11 L14 3 V13.4 Q14 14 13.4 14 H0.6 Q0 14 0 13.4 V0.6 Q0 0 0.6 0Z" fill="#2196f3"/><rect x="3.2" y="0" width="7" height="4.4" fill="#b0bec5"/><rect x="7.4" y="0.8" width="1.8" height="2.8" fill="#455a64"/><rect x="2.2" y="7" width="9.6" height="7" fill="#fff"/><path d="M3.4 8.8 H10.6 M3.4 10.6 H10.6 M3.4 12.4 H10.6" stroke="#cfd8dc" stroke-width="0.7"/></svg>
<svg style="left:131.5px;top:122px;" width="10" height="10" viewBox="0 0 10 10"><path d="M1.4 1.4 L8.6 8.6 M8.6 1.4 L1.4 8.6" stroke="#fdfdfd" stroke-width="3"/><path d="M1.4 1.4 L8.6 8.6 M8.6 1.4 L1.4 8.6" stroke="#4a4fc0" stroke-width="1.5"/></svg>
<svg style="left:293.75px;top:116px;" width="14.5" height="14.5" viewBox="0 0 14.5 14.5"><circle cx="7.25" cy="7.25" r="7.2" fill="#2e8b3d"/><path d="M7.25 3.4 V11.1 M3.4 7.25 H11.1" stroke="#fff" stroke-width="2.2"/></svg>
<svg style="left:389.5px;top:115px;" width="13" height="16" viewBox="0 0 13 16"><path d="M1.6 3.4 H11.4 L10.6 15 Q10.5 16 9.6 16 H3.4 Q2.5 16 2.4 15Z" fill="#ef4a40"/><path d="M4.4 5.4 V14 M6.5 5.4 V14 M8.6 5.4 V14" stroke="#f9a9a2" stroke-width="1"/><path d="M0.4 1.6 Q0.4 1 1 1 H4.2 L4.8 0 H8.2 L8.8 1 H12 Q12.6 1 12.6 1.6 V2.8 H0.4Z" fill="#c62828"/></svg>
<svg style="left:418.5px;top:115px;" width="16" height="16" viewBox="0 0 16 16"><path d="M4.4 0.4 H9.4 L11.6 2.6 V10 H4.4Z" fill="#eceff1" stroke="#cfd5d9" stroke-width="0.8"/><path d="M0.6 3 H6 L8.4 5.4 V14 H0.6Z" fill="#eceff1" stroke="#cfd5d9" stroke-width="0.8"/><path d="M2 6.8 H7 M2 8.8 H7 M2 10.8 H6" stroke="#cfd5d9" stroke-width="0.9"/><circle cx="11" cy="11.6" r="4" fill="#b2d8b4"/><path d="M11 9.4 V13.8 M8.8 11.6 H13.2" stroke="#fff" stroke-width="1.3"/></svg>
<svg style="left:443.7px;top:120.9px;" width="7.5" height="4.2" viewBox="0 0 7.5 4.2"><path d="M0 0 H7.5 L3.75 4.2Z" fill="#b5bbe0"/></svg>
<svg style="left:460px;top:114.5px;" width="16" height="15.5" viewBox="0 0 16 15.5"><path d="M13.2 5 A6 6 0 1 0 14.3 9.6" fill="none" stroke="#3949ab" stroke-width="2"/><path d="M10.2 0.8 L14.9 1.3 L14.6 6.4 Z" fill="#3949ab"/><path d="M9.8 5.2 L14.4 5.6" stroke="#3949ab" stroke-width="1.6"/></svg>
<svg style="left:489.8px;top:117px;" width="1.6" height="11.4" viewBox="0 0 1.6 11.4"><path d="M0.8 0 V11.4" stroke="#3949ab" stroke-width="1.3" stroke-dasharray="1 1.05"/></svg>
<svg style="left:507.9px;top:117.6px;" width="12.2" height="10.6" viewBox="0 0 12.2 10.6"><path d="M0 1.1 H12.2 M0 5.3 H12.2 M0 9.5 H12.2" stroke="#2a35a8" stroke-width="1.9"/></svg>
<svg style="left:540px;top:116.9px;" width="7.2" height="11.9" viewBox="0 0 7.2 11.9"><path d="M7.2 0 V11.9 L0 5.95Z" fill="#b5bbe0"/></svg>
<svg style="left:560.6px;top:120.9px;" width="7.5" height="4.2" viewBox="0 0 7.5 4.2"><path d="M0 0 H7.5 L3.75 4.2Z" fill="#b5bbe0"/></svg>
<svg style="left:581.9px;top:116.9px;" width="7.2" height="11.9" viewBox="0 0 7.2 11.9"><path d="M0 0 V11.9 L7.2 5.95Z" fill="#b5bbe0"/></svg>
<svg style="left:602.5px;top:120.9px;" width="7.5" height="4.2" viewBox="0 0 7.5 4.2"><path d="M0 0 H7.5 L3.75 4.2Z" fill="#b5bbe0"/></svg>
<svg style="left:619.5px;top:116px;" width="15" height="14" viewBox="0 0 15 14"><rect x="3" y="0.2" width="9" height="4" fill="#e6e6e6" stroke="#bdbdbd" stroke-width="0.6"/><rect x="0.2" y="3.6" width="14.6" height="7.6" rx="1.6" fill="#757575"/><circle cx="12.6" cy="5.4" r="0.7" fill="#4caf50"/><rect x="3" y="7.6" width="9" height="6" fill="#f5f5f5" stroke="#757575" stroke-width="0.9"/><path d="M4.6 9.8 H10.4 M4.6 11.6 H10.4" stroke="#757575" stroke-width="0.8"/></svg>
<svg style="left:644.6px;top:120.9px;" width="7.5" height="4.2" viewBox="0 0 7.5 4.2"><path d="M0 0 H7.5 L3.75 4.2Z" fill="#283593"/></svg>
<svg style="left:662px;top:116px;" width="14" height="13.5" viewBox="0 0 14 13.5"><g fill="none" stroke="#3f51b5" stroke-width="1.25" stroke-linecap="round"><path d="M9.6 3.6 L4 9.2 C2.6 10.6 4.4 12.2 5.8 10.8 L12 4.6 C14 2.4 11.4 -0.2 9.2 1.8 L2.4 8.6 C-0.6 11.8 3.4 15.2 6.4 12.2 L11.8 6.8"/></g></svg>
<svg style="left:690.5px;top:115px;" width="16.5" height="16" viewBox="0 0 16.5 16"><rect x="0.2" y="2" width="16.1" height="13.8" rx="1.4" fill="#d5dde1"/><path d="M0.2 3.4 Q0.2 2 1.6 2 H14.9 Q16.3 2 16.3 3.4 V6 H0.2Z" fill="#f44336"/><rect x="4" y="0" width="1.6" height="3.6" rx="0.8" fill="#b0bec5"/><rect x="10.9" y="0" width="1.6" height="3.6" rx="0.8" fill="#b0bec5"/><g fill="#90a4ae"><rect x="2.4" y="7.6" width="1.3" height="1.3"/><rect x="4.9" y="7.6" width="1.3" height="1.3"/><rect x="7.4" y="7.6" width="1.3" height="1.3"/><rect x="9.9" y="7.6" width="1.3" height="1.3"/><rect x="12.4" y="7.6" width="1.3" height="1.3"/><rect x="2.4" y="10.1" width="1.3" height="1.3"/><rect x="4.9" y="10.1" width="1.3" height="1.3"/><rect x="7.4" y="10.1" width="1.3" height="1.3"/><rect x="9.9" y="10.1" width="1.3" height="1.3"/><rect x="12.4" y="10.1" width="1.3" height="1.3"/><rect x="2.4" y="12.6" width="1.3" height="1.3"/><rect x="4.9" y="12.6" width="1.3" height="1.3"/><rect x="7.4" y="12.6" width="1.3" height="1.3"/></g></svg>
<svg style="left:720.5px;top:115px;" width="17" height="16" viewBox="0 0 17 16"><g stroke="#7986cb" stroke-width="1"><path d="M8 7.4 L8.6 1.6 M8 7.4 L2 3.6 M8 7.4 L14.6 5.8 M8 7.4 L3.2 14 M8 7.4 L12.6 12.8"/></g><g fill="#3f51b5"><circle cx="8" cy="7.4" r="2.4"/><circle cx="8.6" cy="1.7" r="1.5"/><circle cx="2" cy="3.6" r="1.6"/><circle cx="14.8" cy="5.8" r="1.6"/><circle cx="3.2" cy="14" r="1.7"/><circle cx="12.6" cy="12.9" r="1.6"/></g></svg>
<svg style="left:750px;top:114.5px;" width="16" height="16.5" viewBox="0 0 16 16.5"><circle cx="7.2" cy="9.4" r="6.9" fill="#2f86e8"/><g fill="none" stroke="#8cc0f7" stroke-width="0.8"><ellipse cx="7.2" cy="9.4" rx="3" ry="6.9"/><path d="M7.2 2.5 V16.3 M0.3 9.4 H14.1 M1.2 6 H13.2 M1.2 12.8 H13.2"/></g><path d="M12.2 0.2 C14 0.2 15.2 1.5 15.2 3 C15.2 4.8 13.2 6.4 12.2 8 C11.2 6.4 9.2 4.8 9.2 3 C9.2 1.5 10.4 0.2 12.2 0.2Z" fill="#f4511e"/><circle cx="12.2" cy="3" r="1.1" fill="#fff"/></svg>
<svg style="left:781.5px;top:117px;" width="1.6" height="11.4" viewBox="0 0 1.6 11.4"><path d="M0.8 0 V11.4" stroke="#3949ab" stroke-width="1.3" stroke-dasharray="1 1.05"/></svg>
<svg style="left:797px;top:115px;" width="14.5" height="16" viewBox="0 0 14.5 16"><path d="M4 7 V4.4 C4 0.2 10.5 0.2 10.5 4.4 V7" fill="none" stroke="#bcc8cf" stroke-width="1.7"/><rect x="0.2" y="6.2" width="14" height="9.6" rx="1.2" fill="#faedb2"/><circle cx="7.2" cy="9.8" r="1.1" fill="#b5bfc6"/><rect x="6.6" y="10" width="1.2" height="3.4" fill="#b5bfc6"/></svg>
<svg style="left:821.9px;top:120.9px;" width="7.5" height="4.2" viewBox="0 0 7.5 4.2"><path d="M0 0 H7.5 L3.75 4.2Z" fill="#b5bbe0"/></svg>
<svg style="left:839.5px;top:116px;" width="13" height="14" viewBox="0 0 13 14"><g fill="#c4c4c4" stroke="#9e9e9e" stroke-width="0.7"><rect x="0.5" y="0.4" width="12" height="3.2"/><rect x="0.5" y="5.3" width="12" height="3.2"/><rect x="0.5" y="10.2" width="12" height="3.2"/></g><path d="M0.8 4.45 H12.2 M0.8 9.35 H12.2" stroke="#42a5f5" stroke-width="0.9"/></svg>
<svg style="left:869.5px;top:114.5px;" width="15.5" height="17" viewBox="0 0 15.5 17"><path d="M0.6 1.6 Q0.6 0.2 2 0.2 H7.4 Q8.8 0.2 8.8 1.6 V13.4 L4.7 11 L0.6 13.4Z" fill="#2196f3"/><circle cx="10.4" cy="12" r="4.6" fill="#fdfdfd"/><circle cx="10.4" cy="12" r="4" fill="#388e3c"/><path d="M10.4 9.6 V14.4 M8 12 H12.8" stroke="#fff" stroke-width="1.3"/></svg>
<svg style="left:899px;top:116.5px;" width="14" height="13.5" viewBox="0 0 14 13.5"><path d="M7 1.4 L8.7 5 L12.7 5.5 L9.8 8.2 L10.5 12.1 L7 10.2 L3.5 12.1 L4.2 8.2 L1.3 5.5 L5.3 5Z" fill="none" stroke="#2196f3" stroke-width="1.4" stroke-linejoin="miter"/></svg>
<svg style="left:926.5px;top:117.5px;" width="17" height="11.5" viewBox="0 0 17 11.5"><path d="M0.8 5.7 C4.4 0.2 12.6 0.2 16.2 5.7 C12.6 11.2 4.4 11.2 0.8 5.7Z" fill="#fff" stroke="#37474f" stroke-width="1.3"/><circle cx="8.5" cy="5.7" r="3.1" fill="#2196f3"/><circle cx="8.5" cy="5.7" r="1.5" fill="#111"/></svg>
<svg style="left:1770.5px;top:116.2px;" width="13.6" height="13.6" viewBox="0 0 13.6 13.6"><circle cx="6.8" cy="6.8" r="6.8" fill="#2196f3"/><circle cx="6.8" cy="3.7" r="0.95" fill="#fff"/><rect x="6" y="5.6" width="1.6" height="4.8" fill="#fff"/></svg>
<svg style="left:32px;top:150px;" width="26" height="32" viewBox="0 0 26 32"><rect x="6.1" y="0" width="19.8" height="25.6" rx="0.8" fill="#c6c6c6"/><rect x="6.1" y="23.8" width="19.8" height="1.8" fill="#9e9e9e"/><rect x="7.9" y="4" width="4.2" height="2" fill="#1e96f5"/><rect x="7.9" y="8" width="4.2" height="2" fill="#1e96f5"/><rect x="7.9" y="12" width="4.2" height="2" fill="#1e96f5"/><rect x="7.9" y="16" width="4.2" height="2" fill="#1e96f5"/><rect x="7.9" y="20" width="4.2" height="2" fill="#1e96f5"/><rect x="13.9" y="4" width="4.2" height="2" fill="#1e96f5"/><rect x="13.9" y="8" width="4.2" height="2" fill="#1e96f5"/><rect x="13.9" y="12" width="4.2" height="2" fill="#1e96f5"/><rect x="13.9" y="16" width="4.2" height="2" fill="#1e96f5"/><rect x="13.9" y="20" width="4.2" height="2" fill="#1e96f5"/><rect x="19.9" y="4" width="4.2" height="2" fill="#1e96f5"/><rect x="19.9" y="8" width="4.2" height="2" fill="#1e96f5"/><rect x="19.9" y="12" width="4.2" height="2" fill="#1e96f5"/><rect x="19.9" y="16" width="4.2" height="2" fill="#1e96f5"/><rect x="19.9" y="20" width="4.2" height="2" fill="#1e96f5"/><path d="M0 31.8 C0 27 3 24.6 6.4 24.2 H11.6 C15 24.6 18 27 18 31.8Z" fill="#3f51b5"/><path d="M7 24.2 L9 28 L11 24.2Z" fill="#fff"/><path d="M8.4 25 H9.6 L10.1 30 L9 31 L7.9 30Z" fill="#e53935"/><path d="M6.4 21 H11.6 V24.4 L9 26 L6.4 24.4Z" fill="#ff9f1c"/><ellipse cx="9" cy="18.6" rx="5" ry="5.6" fill="#ffb74d"/><path d="M3.2 18 C2.2 12 5.4 9.8 9 9.8 C13 9.8 15.8 12.2 14.8 18 C14.2 15.6 12.4 14.6 9 14.6 C5.6 14.6 3.8 15.6 3.2 18Z" fill="#424242"/><circle cx="7" cy="18.4" r="0.6" fill="#7a4a12"/><circle cx="11" cy="18.4" r="0.6" fill="#7a4a12"/></svg>
<svg style="left:84.8px;top:81.8px;" width="13" height="16.2" viewBox="0 0 26 32"><rect x="6.1" y="0" width="19.8" height="25.6" rx="0.8" fill="#c6c6c6"/><rect x="6.1" y="23.8" width="19.8" height="1.8" fill="#9e9e9e"/><rect x="7.9" y="4" width="4.2" height="2" fill="#1e96f5"/><rect x="7.9" y="8" width="4.2" height="2" fill="#1e96f5"/><rect x="7.9" y="12" width="4.2" height="2" fill="#1e96f5"/><rect x="7.9" y="16" width="4.2" height="2" fill="#1e96f5"/><rect x="7.9" y="20" width="4.2" height="2" fill="#1e96f5"/><rect x="13.9" y="4" width="4.2" height="2" fill="#1e96f5"/><rect x="13.9" y="8" width="4.2" height="2" fill="#1e96f5"/><rect x="13.9" y="12" width="4.2" height="2" fill="#1e96f5"/><rect x="13.9" y="16" width="4.2" height="2" fill="#1e96f5"/><rect x="13.9" y="20" width="4.2" height="2" fill="#1e96f5"/><rect x="19.9" y="4" width="4.2" height="2" fill="#1e96f5"/><rect x="19.9" y="8" width="4.2" height="2" fill="#1e96f5"/><rect x="19.9" y="12" width="4.2" height="2" fill="#1e96f5"/><rect x="19.9" y="16" width="4.2" height="2" fill="#1e96f5"/><rect x="19.9" y="20" width="4.2" height="2" fill="#1e96f5"/><path d="M0 31.8 C0 27 3 24.6 6.4 24.2 H11.6 C15 24.6 18 27 18 31.8Z" fill="#3f51b5"/><path d="M7 24.2 L9 28 L11 24.2Z" fill="#fff"/><path d="M8.4 25 H9.6 L10.1 30 L9 31 L7.9 30Z" fill="#e53935"/><path d="M6.4 21 H11.6 V24.4 L9 26 L6.4 24.4Z" fill="#ff9f1c"/><ellipse cx="9" cy="18.6" rx="5" ry="5.6" fill="#ffb74d"/><path d="M3.2 18 C2.2 12 5.4 9.8 9 9.8 C13 9.8 15.8 12.2 14.8 18 C14.2 15.6 12.4 14.6 9 14.6 C5.6 14.6 3.8 15.6 3.2 18Z" fill="#424242"/><circle cx="7" cy="18.4" r="0.6" fill="#7a4a12"/><circle cx="11" cy="18.4" r="0.6" fill="#7a4a12"/></svg>
<svg style="left:202px;top:51px;" width="13" height="16" viewBox="0 0 26 32"><rect x="6.1" y="0" width="19.8" height="25.6" rx="0.8" fill="#c6c6c6"/><rect x="6.1" y="23.8" width="19.8" height="1.8" fill="#9e9e9e"/><rect x="7.9" y="4" width="4.2" height="2" fill="#1e96f5"/><rect x="7.9" y="8" width="4.2" height="2" fill="#1e96f5"/><rect x="7.9" y="12" width="4.2" height="2" fill="#1e96f5"/><rect x="7.9" y="16" width="4.2" height="2" fill="#1e96f5"/><rect x="7.9" y="20" width="4.2" height="2" fill="#1e96f5"/><rect x="13.9" y="4" width="4.2" height="2" fill="#1e96f5"/><rect x="13.9" y="8" width="4.2" height="2" fill="#1e96f5"/><rect x="13.9" y="12" width="4.2" height="2" fill="#1e96f5"/><rect x="13.9" y="16" width="4.2" height="2" fill="#1e96f5"/><rect x="13.9" y="20" width="4.2" height="2" fill="#1e96f5"/><rect x="19.9" y="4" width="4.2" height="2" fill="#1e96f5"/><rect x="19.9" y="8" width="4.2" height="2" fill="#1e96f5"/><rect x="19.9" y="12" width="4.2" height="2" fill="#1e96f5"/><rect x="19.9" y="16" width="4.2" height="2" fill="#1e96f5"/><rect x="19.9" y="20" width="4.2" height="2" fill="#1e96f5"/><path d="M0 31.8 C0 27 3 24.6 6.4 24.2 H11.6 C15 24.6 18 27 18 31.8Z" fill="#3f51b5"/><path d="M7 24.2 L9 28 L11 24.2Z" fill="#fff"/><path d="M8.4 25 H9.6 L10.1 30 L9 31 L7.9 30Z" fill="#e53935"/><path d="M6.4 21 H11.6 V24.4 L9 26 L6.4 24.4Z" fill="#ff9f1c"/><ellipse cx="9" cy="18.6" rx="5" ry="5.6" fill="#ffb74d"/><path d="M3.2 18 C2.2 12 5.4 9.8 9 9.8 C13 9.8 15.8 12.2 14.8 18 C14.2 15.6 12.4 14.6 9 14.6 C5.6 14.6 3.8 15.6 3.2 18Z" fill="#424242"/><circle cx="7" cy="18.4" r="0.6" fill="#7a4a12"/><circle cx="11" cy="18.4" r="0.6" fill="#7a4a12"/></svg>
<svg style="left:32px;top:51.5px;" width="14.5" height="15" viewBox="0 0 14.5 15"><rect x="10.2" y="1.6" width="2" height="4" fill="#e8eaf6"/><path d="M1.6 7 L7.2 1.6 L12.8 7 V14.4 H1.6Z" fill="#e8eaf6"/><rect x="1.2" y="13" width="12" height="1.4" fill="#c5cae9"/><path d="M0.4 7.6 L7.2 1 L14 7.6" fill="none" stroke="#c0392b" stroke-width="1.5" stroke-linejoin="miter"/><rect x="5.2" y="9" width="4" height="5.4" fill="#e64a19"/><rect x="6.2" y="5.2" width="2" height="2" fill="#1a3a8a"/></svg>
<svg style="left:50px;top:216px;" width="70" height="70" viewBox="0 0 70 70"><defs><clipPath id="avc"><circle cx="35" cy="35" r="35"/></clipPath><filter id="avb" x="-20%" y="-20%" width="140%" height="140%"><feGaussianBlur stdDeviation="0.9"/></filter><filter id="avb2" x="-20%" y="-20%" width="140%" height="140%"><feGaussianBlur stdDeviation="0.45"/></filter><radialGradient id="avs" cx="50%" cy="42%" r="62%"><stop offset="0" stop-color="#f1c9b6"/><stop offset="0.65" stop-color="#e8b7a2"/><stop offset="1" stop-color="#d39a84"/></radialGradient><linearGradient id="avh" x1="0" y1="0" x2="1" y2="0"><stop offset="0" stop-color="#6a4a37"/><stop offset="0.3" stop-color="#85624a"/><stop offset="0.5" stop-color="#553c2d"/><stop offset="0.75" stop-color="#80604a"/><stop offset="1" stop-color="#664735"/></linearGradient></defs><g clip-path="url(#avc)"><rect width="70" height="70" fill="#d6d6d6"/><g filter="url(#avb)"><path d="M21 54 H49 V61 C51 63 54 64.5 57 66 L60 72 H10 L13 66 C16 64.5 19 63 21 61Z" fill="#d7a08a"/><ellipse cx="14" cy="39.5" rx="2.2" ry="5.6" fill="#dba08a"/><ellipse cx="56" cy="39.5" rx="2.4" ry="5.8" fill="#dba08a"/><path d="M10.6 33.5 C7 14 18 0 35 0 C52 0 64 13 60.6 34 C59 36 56 35 55.6 32 L52 14 H19 L14.8 32 C14 35 11.4 35.5 10.6 33.5Z" fill="url(#avh)"/><path d="M14.6 33 C13.4 16 22 10.4 34.5 10.4 C47 10.4 56 16 55 33 C55 42 53 50 49.4 56.4 C45.4 62.6 39.6 65.4 34.4 65.4 C29.4 65.4 24 62.6 20 56 C16.4 50 14.8 42 14.6 33Z" fill="url(#avs)"/><ellipse cx="22.5" cy="44" rx="4.6" ry="4" fill="#e0a090" opacity="0.55"/><ellipse cx="47.5" cy="44" rx="4.6" ry="4" fill="#e0a090" opacity="0.55"/><path d="M9.6 33 C6 12 19 -1 35 -1 C51 -1 65 12 61 33.5 C60 35 57.6 35 56 32.8 C55.4 26 53.6 21.4 50 18.6 C45 13 40 11 34.3 10.7 C28 12 23 14 20 17 C16.6 21 15.4 26 14.7 32 C13.4 35 10.6 35 9.6 33Z" fill="url(#avh)"/></g><g filter="url(#avb2)"><path d="M20 29.2 C23 27.2 27 27.4 29.8 28.8 M39.8 28.8 C42.6 27.4 47 27.2 50 29.4" fill="none" stroke="#8a6753" stroke-width="1.5"/><ellipse cx="25.9" cy="32.9" rx="3.5" ry="1.5" fill="#f1ddd3"/><ellipse cx="43.8" cy="32.9" rx="3.5" ry="1.5" fill="#f1ddd3"/><ellipse cx="26" cy="32.8" rx="2.1" ry="1.5" fill="#4a3a30"/><ellipse cx="43.8" cy="32.8" rx="2.1" ry="1.5" fill="#4a3a30"/><path d="M22.3 32.4 C24.4 30.8 27.6 30.8 29.6 32.6 M40.2 32.6 C42.2 30.8 45.4 30.8 47.5 32.4" fill="none" stroke="#6a4c40" stroke-width="0.8"/><path d="M31 44.2 C32.6 46 37.4 46 39 44.2" fill="none" stroke="#c28c78" stroke-width="1.5"/><path d="M27 50.4 C30 49 33 49.6 34.8 50 C36.6 49.6 39.6 49 42.6 50.4 C40 55.8 29.6 55.8 27 50.4Z" fill="#d68a96"/><path d="M28.4 50.9 C32 50.4 37.6 50.4 41.2 50.9 C39 52.8 30.6 52.8 28.4 50.9Z" fill="#f0e0d6"/><path d="M27 50.4 C30 49.2 33 49.8 34.8 50.2 C36.6 49.8 39.6 49.2 42.6 50.4" fill="none" stroke="#b26e72" stroke-width="0.9"/></g><path d="M17.6 60.4 C17.6 63 18.4 65 19.4 67 M52 61 C52.2 63.6 51.6 65.6 50.6 67.4" fill="none" stroke="#6e4430" stroke-width="0.7"/></g></svg>
<svg style="left:142.8px;top:258.3px;" width="8.4" height="11" viewBox="0 0 8.4 11"><path d="M4.2 0 C6.6 0 8.4 1.8 8.4 4.1 C8.4 7 4.2 11 4.2 11 C4.2 11 0 7 0 4.1 C0 1.8 1.8 0 4.2 0Z" fill="#f1f2fb"/><circle cx="4.2" cy="4" r="1.5" fill="#2f4899"/></svg>
<svg style="left:163.5px;top:258.8px;" width="10.8" height="10.4" viewBox="0 0 10.8 10.4"><path d="M2 0 H4 L4.8 3 L3.4 4.4 C4.2 6 5.2 7 6.8 7.8 L8.2 6.4 L10.8 7.2 V9.4 Q10.8 10.4 9.8 10.4 C4.4 10.2 0.4 6 0 1 Q0 0 1 0Z" fill="#f1f2fb"/></svg>
<svg style="left:184.8px;top:259px;" width="12" height="9.8" viewBox="0 0 12 9.8"><rect width="12" height="9.8" rx="1" fill="#f1f2fb"/><path d="M1 1.4 L6 5.4 L11 1.4" fill="none" stroke="#2f4899" stroke-width="1.1"/></svg>
<svg style="left:51.5px;top:312.5px;" width="13" height="17" viewBox="0 0 13 17"><rect x="0.8" y="2.6" width="11.4" height="13.6" rx="1.4" fill="#fff" stroke="#455a64" stroke-width="1.2"/><path d="M3 2 H5 C5 -0.2 8 -0.2 8 2 H10 V4 Q10 4.8 9.2 4.8 H3.8 Q3 4.8 3 4Z" fill="#90a4ae"/><circle cx="6.5" cy="1.9" r="0.7" fill="#fff"/><path d="M3.4 9.8 L5.6 12 L9.8 6.8" fill="none" stroke="#43a047" stroke-width="1.6"/></svg>
<svg style="left:51px;top:362px;" width="14" height="15" viewBox="0 0 14 15"><rect x="0" y="1" width="14" height="14" rx="1.6" fill="#cfd8dc"/><path d="M0 2.6 Q0 1 1.6 1 H12.4 Q14 1 14 2.6 V5.2 H0Z" fill="#f44336"/><rect x="3" y="0" width="1.1" height="3.2" rx="0.5" fill="#b0bec5"/><rect x="9.9" y="0" width="1.1" height="3.2" rx="0.5" fill="#b0bec5"/><g fill="#b0bec5"><rect x="3" y="7" width="1.8" height="1.8"/><rect x="6.1" y="7" width="1.8" height="1.8"/><rect x="9.2" y="7" width="1.8" height="1.8"/><rect x="3" y="10.2" width="1.8" height="1.8"/><rect x="6.1" y="10.2" width="1.8" height="1.8"/></g><rect x="9.1" y="10.1" width="2" height="2" fill="#ff1f10"/></svg>
<svg style="left:51px;top:411px;" width="15" height="16.5" viewBox="0 0 15 16.5"><path d="M0.6 0.6 H8.4 L11 3.2 V15.4 H0.6Z" fill="#fff" stroke="#607d8b" stroke-width="1.1"/><path d="M8.2 0.6 V3.4 H11Z" fill="#78909c"/><rect x="2.2" y="2.2" width="4.6" height="1.7" fill="#9bc31c"/><path d="M2.2 5.8 H9.4 M2.2 7.8 H9.4" stroke="#90a4ae" stroke-width="0.8"/><path d="M2.4 13.4 L3.2 10.6 L4.4 9.4 L5.4 11.8 L6.8 10.8 L7.6 12 L8.6 11.2 L9 13.4Z" fill="#4a8fe0"/><path d="M2 13.7 H9.4" stroke="#607d8b" stroke-width="0.7"/><path d="M11.8 2.8 C13.4 2.8 14 4 13.8 5.6 L12.6 11.2 H11.2 L9.9 5.6 C9.7 4 10.2 2.8 11.8 2.8Z" fill="#e8290f"/><circle cx="11.9" cy="14.2" r="2" fill="#e8290f"/></svg>
<svg style="left:50px;top:460px;" width="16" height="16" viewBox="0 0 16 16"><g transform="rotate(-40 8 8)"><path d="M0.6 3.6 H15.4 V6.2 A1.2 1.2 0 0 0 15.4 8.6 A1.2 1.2 0 0 0 15.4 9.8 V12.4 H0.6 V9.8 A1.2 1.2 0 0 0 0.6 8.6 A1.2 1.2 0 0 0 0.6 6.2Z" fill="#ffa322"/><path d="M11 3.6 V12.4" stroke="#ffc36b" stroke-width="0.8"/></g></svg>
<svg style="left:50px;top:509px;" width="16" height="15.5" viewBox="0 0 16 15.5"><path d="M4 3.4 H15.4 V14.4 H1.6 Q0.6 14.4 0.6 13 V2" fill="#fdfdfd" stroke="#78909c" stroke-width="1.1"/><path d="M0.6 9.4 V2 Q0.6 0.6 2.2 0.6 Q3.6 0.6 3.6 2 V9.4 Q3.6 10 2.2 10 Q0.6 10 0.6 11.4" fill="#fff" stroke="#78909c" stroke-width="1.1"/><path d="M5.4 10 L7.6 7.4 L9 9 L11.8 6.4" fill="none" stroke="#1976d2" stroke-width="1.1"/><circle cx="12.2" cy="6" r="1" fill="#1976d2"/><path d="M5 11.8 H12.8" stroke="#1976d2" stroke-width="1.2"/></svg>
<svg style="left:45.5px;top:686px;opacity:.85" width="13" height="16" viewBox="0 0 13 16"><path d="M3 5.6 C5 4.2 6.6 1.4 10.6 0.6 L11.6 1.8 C9 2.6 8.4 4.2 7.6 5.6Z" fill="#cfd4d6"/><path d="M2.4 5.4 H9.2 L10.4 11.6 H12.4 V15.6 H0.4 V11.6 H1.2Z" fill="#9aa5a8"/><path d="M6.6 7 L4.6 10.6 H6 L5.2 13.6 L7.8 9.6 H6.4 L7.4 7Z" fill="#e6d94e"/></svg>
<svg style="left:44.6px;top:719px;opacity:.85" width="16" height="16" viewBox="0 0 16 16"><path d="M0.5 0.5 H8 L10.4 2.9 V14.8 H0.5Z" fill="#fdfdfd" stroke="#b7c0c5" stroke-width="0.9"/><rect x="2" y="2.6" width="4.6" height="1.4" fill="#6fa8dc"/><path d="M2 6 H8.6 M2 7.8 H8.6" stroke="#cfd8dc" stroke-width="0.7"/><path d="M2 13 L3.4 10 L4.6 12 L5.6 10.8 L6.4 13Z" fill="#9fc0e8"/><circle cx="11.4" cy="11.4" r="4.3" fill="#f3cf63"/><circle cx="11.4" cy="11.4" r="3.2" fill="none" stroke="#e2b541" stroke-width="0.6"/><path d="M12.8 9.8 C11 8.8 9.8 10 9.8 11.4 C9.8 12.8 11 14 12.8 13 M9 10.9 H11.8 M9 11.9 H11.8" fill="none" stroke="#c9992a" stroke-width="0.7"/></svg>
<svg style="left:44.8px;top:753.5px;opacity:.85" width="15" height="12.5" viewBox="0 0 15 12.5"><path d="M0.4 4.8 L4.4 2 V0.6 H10.6 V2 L14.6 4.8 V12.2 H0.4Z" fill="#f6e7d9"/><path d="M5 9.8 C5.6 8.6 4.6 7.8 5.4 6.4 M7.4 9.8 C8 8.6 7 7.8 7.8 6.4 M9.8 9.8 C10.4 8.6 9.4 7.8 10.2 6.4" fill="none" stroke="#d98b86" stroke-width="0.8"/></svg>
<svg style="left:47px;top:786.2px;opacity:.85" width="10" height="13.6" viewBox="0 0 10 13.6"><path d="M5 0 C5.6 2.6 9 4.4 9 7.6 C9 10 7.2 11.4 5 11.4 C2.8 11.4 1 10 1 7.6 C1 5.6 2.2 4.8 2.8 3.2 C3.6 4 3.8 4.8 4 5.4 C4.8 4 5.2 2 5 0Z" fill="#5aaef0"/><path d="M5 5.8 C5.4 7.2 7 7.8 7 9.4 C7 10.6 6 11.2 5 11.2 C4 11.2 3 10.6 3 9.4 C3 7.8 4.6 7.2 5 5.8Z" fill="#d8ecfb"/><rect x="0.4" y="11.8" width="9.2" height="1.6" rx="0.5" fill="#9aa5a8"/></svg>
<svg style="left:45.8px;top:819.6px;opacity:.85" width="12.6" height="12.6" viewBox="0 0 12.6 12.6"><path d="M4.4 0.4 H8.2 V3.4 L6.3 5 L4.4 3.4Z" fill="#e8c85c"/><rect x="5.8" y="4.6" width="1" height="2.4" fill="#b98a6e"/><path d="M2 6.8 H10.6 L12.4 12.2 H0.2Z" fill="#b67a5e"/><path d="M1.2 9.4 H11.4 M4.4 6.8 L3.6 12.2 M8.2 6.8 L9 12.2" stroke="#d9a98f" stroke-width="0.6"/></svg>
<svg style="left:47.8px;top:852px;opacity:.85" width="8.4" height="13.8" viewBox="0 0 8.4 13.8"><rect x="2.6" y="0" width="3.2" height="1.6" rx="0.4" fill="#b5cf9c"/><rect x="0" y="1.1" width="8.4" height="12.7" rx="1.2" fill="#a8c88e"/><path d="M4.8 3.4 L2.6 7.6 H4.2 L3.6 11.2 L6 6.6 H4.4Z" fill="#e2e88e"/></svg>
<svg style="left:46.4px;top:885.8px;opacity:.85" width="11.6" height="11.4" viewBox="0 0 11.6 11.4"><path d="M7.6 2.4 L9.6 0.4 M9.6 4.4 L11.4 2.6" stroke="#e5c655" stroke-width="0.9"/><path d="M4.4 2.2 L9.8 7 L7.6 8.4 L2 8.4 L1.6 6.4Z" fill="#a7adb0"/><path d="M1.8 7.2 L0.6 8.6 L2.6 9.8 Z" fill="#8b9295"/><path d="M1 10.6 C3.4 11.4 6 11 8 9.6" fill="none" stroke="#d5dadc" stroke-width="0.7"/></svg>
<svg style="left:46px;top:917.8px;opacity:.85" width="13" height="14" viewBox="0 0 13 14"><rect x="1.4" y="1.6" width="10.8" height="11.6" rx="1.2" fill="#fdfdfd" stroke="#c0d4ac" stroke-width="0.9"/><rect x="0" y="0" width="2.2" height="2.2" fill="#8fb56f"/></svg>
<span class="t" style="left:49.30px;top:919px;font-size:11.13px;line-height:12px;color:#777;transform:scaleX(0.9050);">P</span>
<svg style="left:47.8px;top:951.6px;opacity:.85" width="8.4" height="13" viewBox="0 0 8.4 13"><path d="M4.2 0 C5 2.8 8.4 5.8 8.4 8.8 C8.4 11.2 6.6 13 4.2 13 C1.8 13 0 11.2 0 8.8 C0 5.8 3.4 2.8 4.2 0Z" fill="#a9cfea"/><path d="M2 9.4 C2.2 10.6 3 11.2 4 11.4" fill="none" stroke="#d9ecf8" stroke-width="0.8"/></svg>
<svg style="left:402px;top:462.6px;" width="14" height="15.2" viewBox="0 0 14 15.2"><circle cx="7" cy="6.9" r="6.9" fill="#fff1a4"/><path d="M7 2.5 C9.5 2.5 11.3 4.4 11.3 6.6 C11.3 8.6 9.8 9.6 9.2 11.4 H4.8 C4.2 9.6 2.7 8.6 2.7 6.6 C2.7 4.4 4.5 2.5 7 2.5Z" fill="#fbbf2d"/><path d="M5.6 6.4 Q7 5.4 8.4 6.4 M6.4 6.6 L6.2 11 M7.6 6.6 L7.8 11" fill="none" stroke="#fde08a" stroke-width="0.8"/><path d="M5 11.3 H9 V13.4 L8 15 H6 L5 13.4Z" fill="#7986cb"/></svg>
<svg style="left:402px;top:510.8px;" width="14" height="15.2" viewBox="0 0 14 15.2"><circle cx="7" cy="6.9" r="6.9" fill="#fff1a4"/><path d="M7 2.5 C9.5 2.5 11.3 4.4 11.3 6.6 C11.3 8.6 9.8 9.6 9.2 11.4 H4.8 C4.2 9.6 2.7 8.6 2.7 6.6 C2.7 4.4 4.5 2.5 7 2.5Z" fill="#fbbf2d"/><path d="M5.6 6.4 Q7 5.4 8.4 6.4 M6.4 6.6 L6.2 11 M7.6 6.6 L7.8 11" fill="none" stroke="#fde08a" stroke-width="0.8"/><path d="M5 11.3 H9 V13.4 L8 15 H6 L5 13.4Z" fill="#7986cb"/></svg>
<svg style="left:1201.6px;top:502.8px;" width="11" height="15.2" viewBox="0 0 11 15.2"><path d="M1.4 0.8 L3.4 2.2 L5.4 0 L7.4 2.2 L9.4 0.8 V4 H1.4Z" fill="#fbc02d"/><path d="M1.6 4 H9.2 L9 6.6 C8.6 8.6 7 10.2 6.6 11.2 H4.2 C3.8 10.2 2.2 8.6 1.8 6.6Z" fill="#ffa726"/><path d="M1.2 4.4 H2.4 V6.6 H1.4Z M8.4 4.4 H9.6 L9.4 6.6 H8.4Z" fill="#c9b9a0"/><path d="M4.4 9.6 H6.4 L5.4 11.6Z" fill="#fb8c00"/><path d="M0 15 C0 12.2 1.6 11.2 3.6 11 H7.2 C9.2 11.2 10.8 12.2 10.8 15Z" fill="#ee3124"/><path d="M2.8 11 H8 L6.8 13 H4Z" fill="#eceff1"/></svg>
<svg style="left:1465.6px;top:677.8px;" width="13.4" height="13.2" viewBox="0 0 13.4 13.2"><rect x="2.2" y="2.4" width="11" height="10.6" fill="#d4d4d4"/><path d="M2.2 13 L13.2 5 V13Z" fill="#bdbdbd"/><path d="M3.8 0 C6 0 7.6 1.6 7.6 3.6 C7.6 6.2 3.8 9.8 3.8 9.8 C3.8 9.8 0 6.2 0 3.6 C0 1.6 1.6 0 3.8 0Z" fill="#9e9e9e" stroke="#f5f5f5" stroke-width="0.6"/><circle cx="3.8" cy="3.6" r="1.5" fill="#f5f5f5"/></svg>
<svg style="left:1472.6px;top:872.6px;" width="14" height="14.2" viewBox="0 0 14 14.2"><path d="M1.6 0.6 H4 L4.8 4.2 L3.4 5.6 C4.4 7.8 6 9.4 8.2 10.4 L9.6 9 L13.2 9.8 V12.2 Q13.2 13.4 12 13.4 C5.6 13.2 0.8 8.4 0.6 1.8 Q0.6 0.6 1.6 0.6Z" fill="#b4b4b4"/><path d="M7.4 3.4 H12.6 M10.6 1 L13 3.4 L10.6 5.8" fill="none" stroke="#b4b4b4" stroke-width="1.4"/></svg>
<svg style="left:1472.6px;top:902.6px;" width="14" height="14.2" viewBox="0 0 14 14.2"><path d="M1.6 0.6 H4 L4.8 4.2 L3.4 5.6 C4.4 7.8 6 9.4 8.2 10.4 L9.6 9 L13.2 9.8 V12.2 Q13.2 13.4 12 13.4 C5.6 13.2 0.8 8.4 0.6 1.8 Q0.6 0.6 1.6 0.6Z" fill="#b4b4b4"/><path d="M7.4 3.4 H12.6 M10.6 1 L13 3.4 L10.6 5.8" fill="none" stroke="#b4b4b4" stroke-width="1.4"/></svg>
<svg style="left:1472.8px;top:935px;" width="14.2" height="11.2" viewBox="0 0 14.2 11.2"><rect x="0.6" y="0.6" width="13" height="10" fill="#fdfdfd" stroke="#b4b4b4" stroke-width="1.1"/><rect x="9.8" y="2.2" width="2.2" height="2.2" fill="#9e9e9e"/><path d="M2.4 6 H7.6 M2.4 7.8 H7.6" stroke="#c4c4c4" stroke-width="0.9"/></svg>
<svg style="left:1474.4px;top:964.4px;" width="11" height="11" viewBox="0 0 11 11"><circle cx="5.5" cy="5.5" r="4.9" fill="#fdfdfd" stroke="#a9a9a9" stroke-width="1.1"/><path d="M3 2.4 L5.6 1.8 L6.4 3.4 L4.6 5 L4.2 7.8 L2.2 6 Z M6.4 5.6 L8.8 5.2 L9.4 7 L7.4 9.4 L6.2 8Z" fill="#a9a9a9"/></svg>
</div></body></html>
